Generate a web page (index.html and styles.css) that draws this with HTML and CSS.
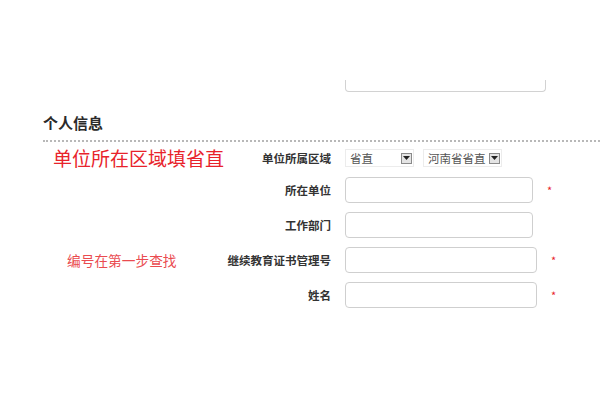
FILE: index.html
```html
<!DOCTYPE html>
<html lang="zh-CN">
<head>
<meta charset="utf-8">
<title>个人信息</title>
<link rel="stylesheet" href="styles.css">
</head>
<body>
<div class="page">
  <div class="top-box"></div>
  <h2 class="section-title">个人信息</h2>
  <div class="divider"></div>
  <div class="form-grid">
    <div class="note note-big">单位所在区域填省直</div>
    <div class="label">单位所属区域</div>
    <div class="field">
      <div class="select sel-1"><span class="sel-text">省直</span><span class="sel-btn"><svg width="7" height="4" viewBox="0 0 7 4"><path d="M0 0H7L3.5 4Z" fill="#222"/></svg></span></div>
      <div class="select sel-2"><span class="sel-text">河南省省直</span><span class="sel-btn"><svg width="7" height="4" viewBox="0 0 7 4"><path d="M0 0H7L3.5 4Z" fill="#222"/></svg></span></div>
    </div>

    <div class="note"></div>
    <div class="label">所在单位</div>
    <div class="field"><div class="input w187"></div><span class="req">*</span></div>

    <div class="note"></div>
    <div class="label">工作部门</div>
    <div class="field"><div class="input w187"></div></div>

    <div class="note note-small">编号在第一步查找</div>
    <div class="label">继续教育证书管理号</div>
    <div class="field"><div class="input w191"></div><span class="req">*</span></div>

    <div class="note"></div>
    <div class="label">姓名</div>
    <div class="field"><div class="input w191"></div><span class="req">*</span></div>
  </div>
</div>
</body>
</html>
```

FILE: styles.css
```css
html, body {
  margin: 0;
  padding: 0;
  background: #fff;
}
body {
  font-family: "Noto Sans CJK SC", "Noto Sans", sans-serif;
  color: #333;
}
.page {
  padding-left: 43px;
}
.top-box {
  margin-top: 80px;
  margin-left: 302px;
  width: 199px;
  height: 11px;
  border: 1px solid #d2d2d2;
  border-top: none;
  border-radius: 0 0 4px 4px;
}
.section-title {
  margin: 20px 0 0 0;
  font-size: 15px;
  line-height: 22px;
  font-weight: bold;
  color: #2a2a2a;
}
.divider {
  margin-top: 6px;
  border-top: 2px dotted #b8b8b8;
  height: 0;
}
.form-grid {
  margin-top: 6px;
  display: grid;
  grid-template-columns: 180px 108px 1fr;
  row-gap: 9px;
  grid-auto-rows: 26px;
  grid-template-rows: 20px;
  align-items: center;
}
.note {
  color: #e8232b;
  white-space: nowrap;
}
.note-big {
  padding-left: 10px;
  font-size: 19px;
  line-height: 20px;
}
.note-small {
  padding-left: 24px;
  font-size: 13.7px;
  line-height: 20px;
  color: #ea4b50;
}
.label {
  text-align: right;
  font-size: 11.5px;
  font-weight: bold;
  color: #333;
  white-space: nowrap;
}
.field {
  display: flex;
  align-items: center;
  padding-left: 14px;
}
.select {
  height: 18px;
  box-sizing: border-box;
  border: 1px solid #ececec;
  display: flex;
  align-items: center;
  justify-content: space-between;
  padding: 0 1px 0 4px;
  background: #fff;
}
.sel-1 { width: 69px; }
.sel-2 { width: 79px; margin-left: 9px; }
.sel-text {
  font-size: 11.5px;
  color: #555;
  white-space: nowrap;
}
.sel-btn {
  width: 11px;
  height: 11px;
  box-sizing: border-box;
  border: 1px solid #8a8a8a;
  background: #e4e4e4;
  display: flex;
  align-items: center;
  justify-content: center;
}
.input {
  height: 26px;
  box-sizing: border-box;
  border: 1px solid #cfcfcf;
  border-radius: 4px;
  background: #fff;
}
.w187 { width: 188px; }
.w191 { width: 192px; }
.req {
  color: #e8232b;
  font-size: 11px;
  margin-left: 14px;
  line-height: 10px;
}
```
